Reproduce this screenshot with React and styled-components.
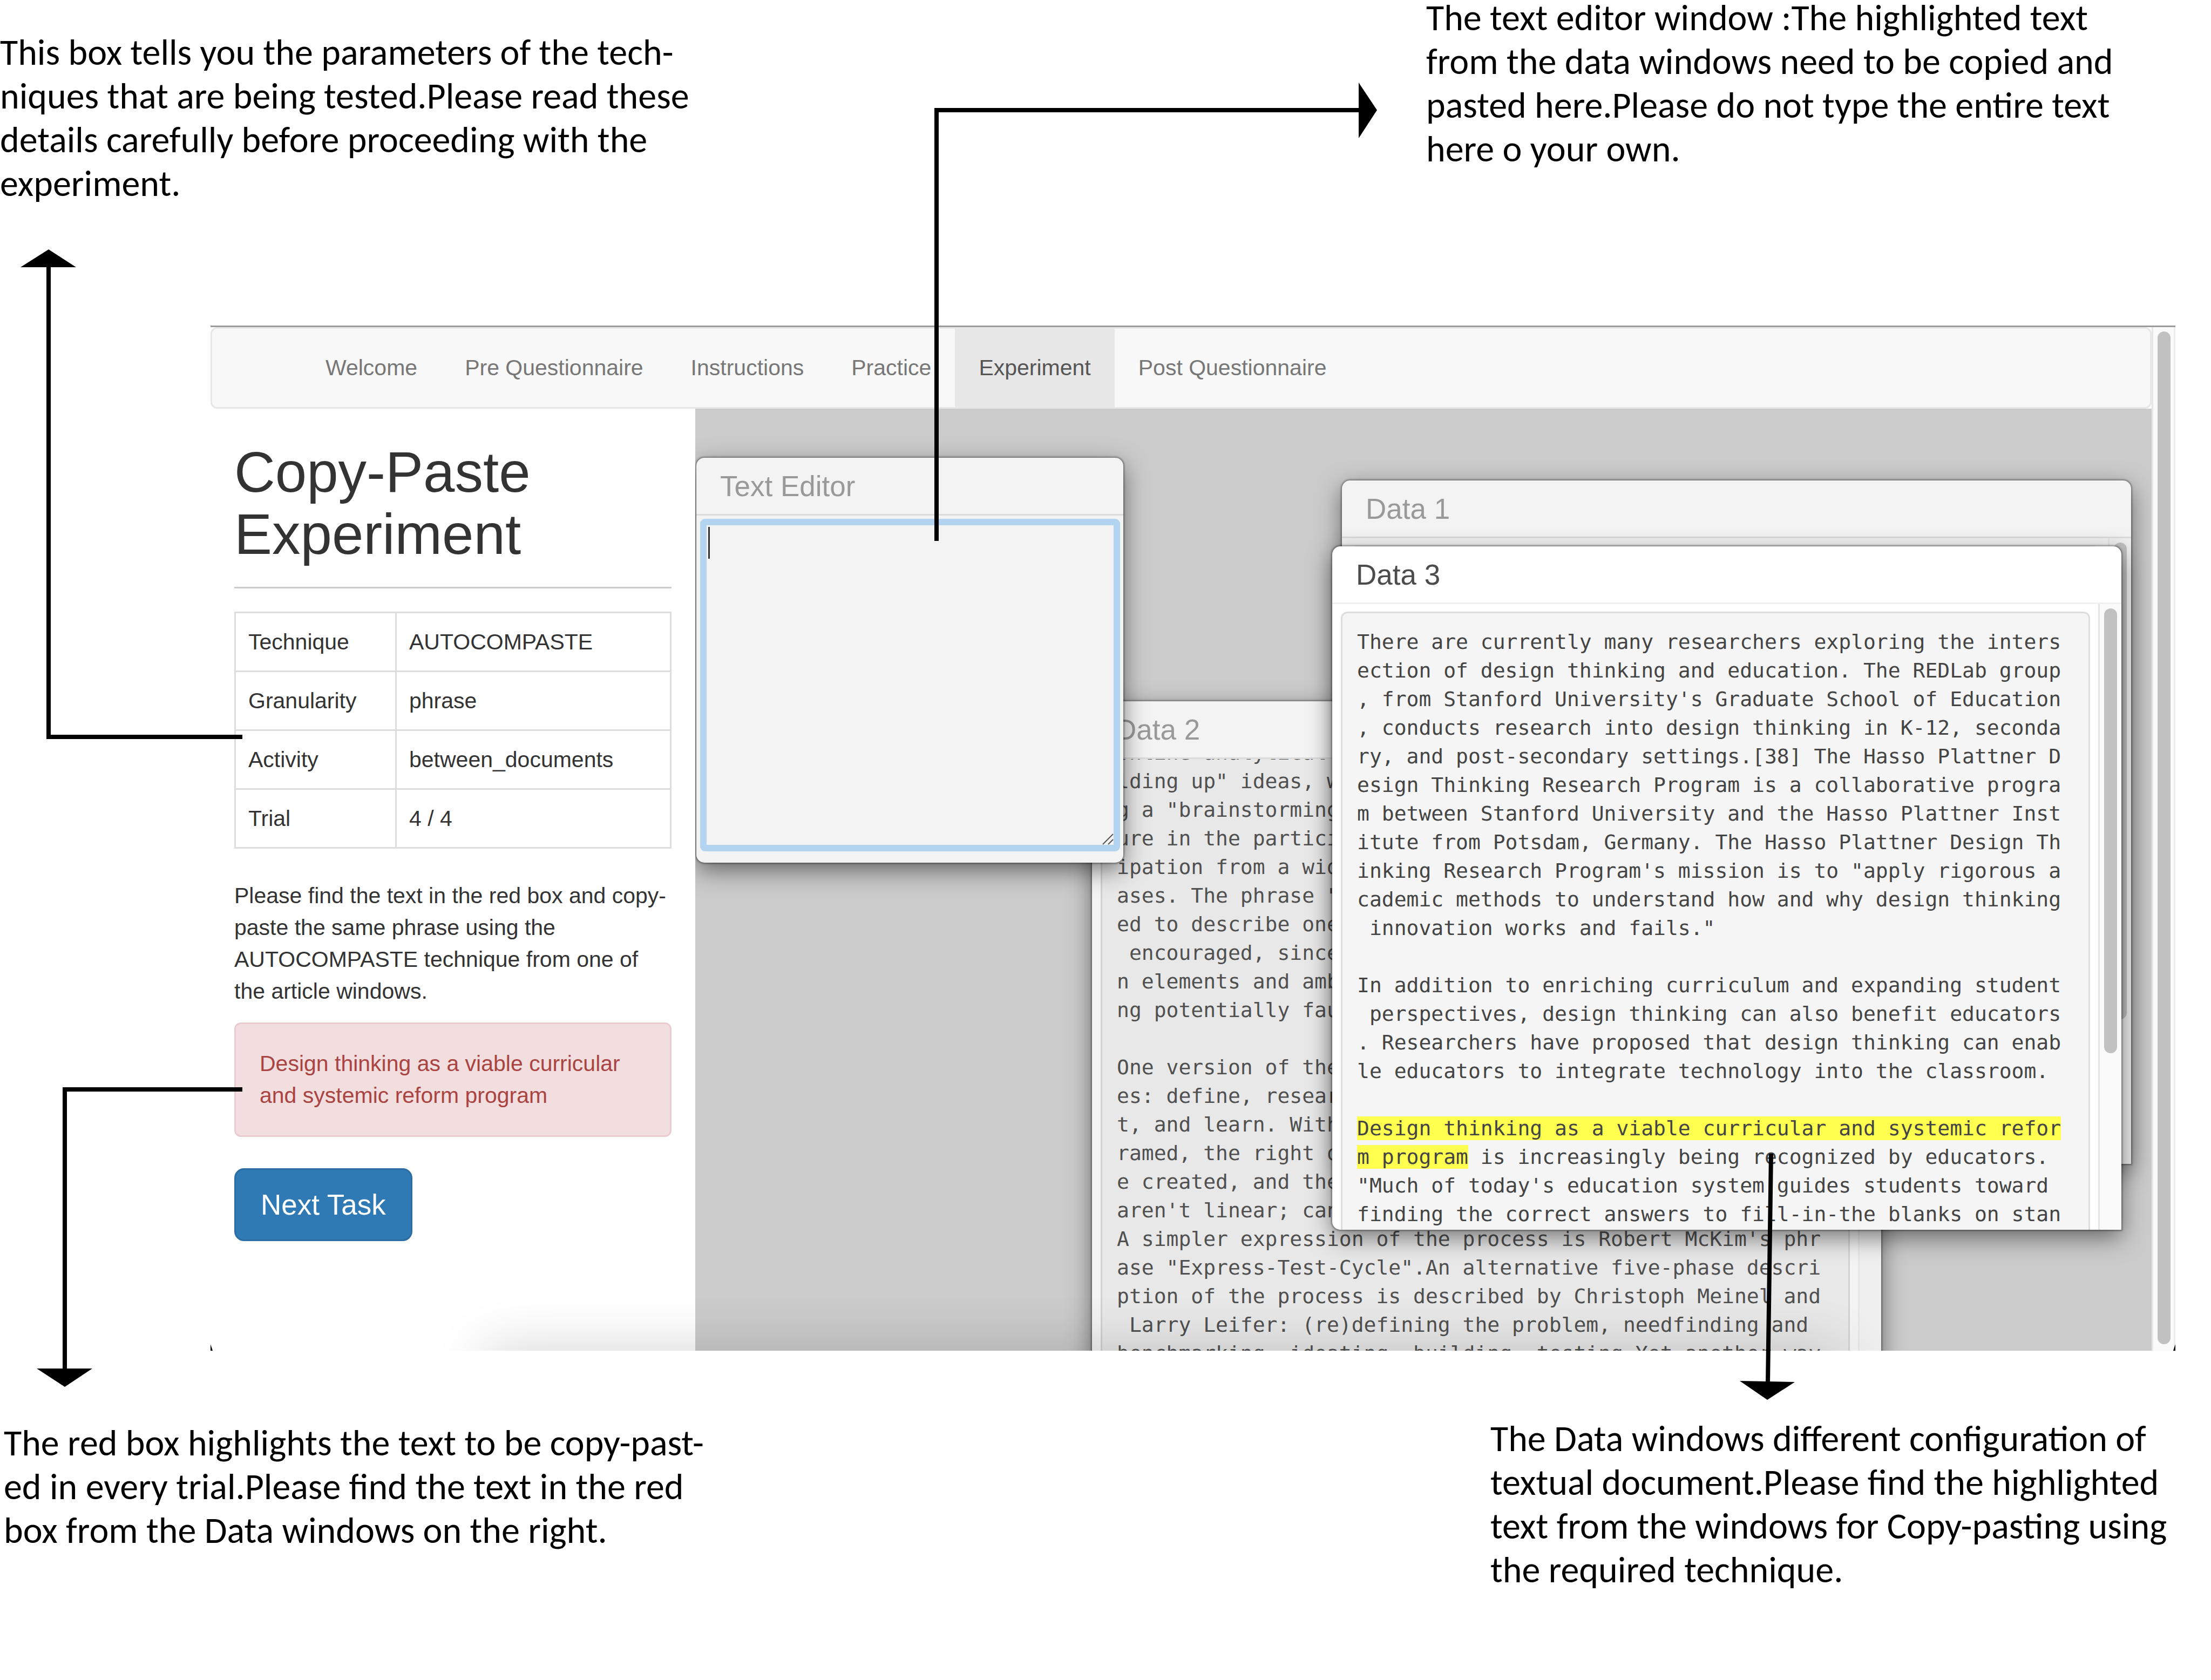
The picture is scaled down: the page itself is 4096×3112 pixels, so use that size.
import React from 'react';
import styled, { createGlobalStyle, css } from 'styled-components';

const sans = '"Liberation Sans", Arial, sans-serif';
const mono = '"DejaVu Sans Mono", monospace';

const GlobalStyle = createGlobalStyle`
  *, *::before, *::after { box-sizing: border-box; }
  body { margin: 0; background: #fff; }
`;

const Page = styled.div`
  position: relative;
  overflow: hidden;
  min-height: 100vh;
  display: flex;
  flex-direction: column;
  font-family: ${sans};
  font-size: 41px;
  line-height: 59px;
  color: #333;
`;

const NotesRow = styled.section`
  display: flex;
  justify-content: space-between;
  align-items: flex-start;
  ${(p) => (p.$place === 'top'
    ? css`margin-top: -8px; height: 611px; padding: 0 66px 0 0;`
    : css`padding: 122px 0 0 7px;`)}
`;

const Note = styled.p`
  margin: 0;
  padding-top: ${(p) => p.$drop || 0}px;
  width: ${(p) => p.$width}px;
  font-family: Carlito, Lato, sans-serif;
  font-size: 68px;
  line-height: 81px;
  color: #000;
  white-space: pre-line;
`;

const Frame = styled.main`
  position: relative;
  margin: 0 66px 0 390px;
  height: 1899px;
  border-top: 3px solid #9c9a9a;
  display: flex;
  overflow: hidden;
`;

const AppArea = styled.div`
  flex: 1;
  min-width: 0;
  display: flex;
  flex-direction: column;
`;

const Nav = styled.nav`
  display: flex;
  height: 151px;
  padding-left: 166px;
  background: #f8f8f8;
  border: 3px solid #e7e7e7;
  border-radius: 12px;
`;

const NavLink = styled.a`
  display: flex;
  align-items: center;
  padding: 0 44px;
  color: ${(p) => (p.$active ? '#555' : '#777')};
  background: ${(p) => (p.$active ? '#e7e7e7' : 'transparent')};
  text-decoration: none;
`;

const Workspace = styled.div`
  flex: 1;
  min-height: 0;
  display: flex;
`;

const Sidebar = styled.aside`
  width: 898px;
  flex: none;
  padding: 60px 44px 0;
`;

const Title = styled.h1`
  margin: 0;
  padding-bottom: 40px;
  border-bottom: 3px solid #ccc;
  font-size: 105px;
  line-height: 115px;
  font-weight: 400;
`;

const Params = styled.table`
  width: 100%;
  margin-top: 43px;
  border-collapse: collapse;
  table-layout: fixed;
  th, td {
    height: 109px;
    padding: 0 23px;
    border: 3px solid #ddd;
    text-align: left;
    font-weight: 400;
  }
  th { width: 298px; }
`;

const Help = styled.p`
  margin: 58px 0 28px;
`;

const Phrase = styled.div`
  padding: 44px;
  border: 3px solid #ebccd1;
  border-radius: 12px;
  background: #f2dede;
  color: #a94442;
`;

const NextButton = styled.button`
  margin-top: 58px;
  padding: 35px 46px;
  border: 3px solid #2e6da4;
  border-radius: 18px;
  background: #2f7ab4;
  color: #fff;
  font-family: ${sans};
  font-size: 53px;
  line-height: 59px;
`;

const Canvas = styled.div`
  position: relative;
  flex: 1;
  background: #cbcbcb;
  overflow: hidden;
`;

const Win = styled.section`
  position: absolute;
  left: ${(p) => p.$x}px;
  top: ${(p) => p.$y}px;
  width: ${(p) => p.$w}px;
  height: ${(p) => p.$h}px;
  display: flex;
  flex-direction: column;
  overflow: hidden;
  border-radius: ${(p) => (p.$scrolls ? '15px 15px 0 15px' : '15px')};
  background: ${(p) => (p.$active ? '#fff' : '#f3f3f3')};
  color: ${(p) => (p.$active ? '#4c4c4c' : '#999')};
  box-shadow: 0 0 3px 2px rgba(0, 0, 0, 0.35), 0 14px 44px rgba(0, 0, 0, 0.5);
`;

const WinTitle = styled.h2`
  margin: 0;
  flex: none;
  padding: 25px 44px 23px;
  border-bottom: 3px solid ${(p) => (p.$active ? '#f0f0f0' : '#dcdcdc')};
  font-size: 53px;
  line-height: 56px;
  font-weight: 400;
`;

const EditorBody = styled.div`
  position: relative;
  flex: 1;
  display: flex;
  padding: 6px 6px 21px 7px;
`;

const Editor = styled.textarea`
  flex: 1;
  border: 12px solid #b3d4f0;
  border-radius: 9px;
  padding: 3px 6px;
  background: #f3f3f3;
  font-family: ${sans};
  font-size: 41px;
  line-height: 59px;
  outline: none;
  resize: none;
`;

const Caret = styled.span`
  position: absolute;
  left: 22px;
  top: 21px;
  width: 3px;
  height: 59px;
  background: #333;
`;

const Grip = styled.svg`
  position: absolute;
  right: 18px;
  bottom: 33px;
  width: 21px;
  height: 21px;
`;

const DocBody = styled.div`
  flex: 1;
  min-height: 0;
  display: flex;
  overflow: hidden;
`;

const Doc = styled.pre`
  flex: 1;
  min-width: 0;
  height: 1600px;
  margin: ${(p) => (p.$scrolled ? -68 : 14)}px 15px 0 16px;
  padding: 27px;
  border: 3px solid ${(p) => (p.$active ? '#ddd' : '#d2d2d2')};
  border-radius: 12px;
  background: ${(p) => (p.$active ? '#f5f5f5' : '#e8e8e8')};
  color: ${(p) => (p.$active ? '#444' : '#505050')};
  font-family: ${mono};
  font-size: 38px;
  line-height: 53px;
`;

const Mark = styled.mark`
  background: #ffff50;
  color: inherit;
`;

const Track = styled.div`
  flex: none;
  width: ${(p) => p.$w}px;
  padding: 8px 8px 0;
  border-left: 3px solid #e6e6e6;
  background: ${(p) => (p.$dim ? '#efefef' : '#fafafa')};
`;

const PageTrack = styled(Track)`
  padding-right: 6px;
  border-right: 3px solid #ececec;
`;

const Thumb = styled.div`
  height: ${(p) => p.$h}px;
  border-radius: 12px;
  background: #c1c1c1;
`;

const DockShade = styled.div`
  position: absolute;
  left: 530px;
  right: 640px;
  bottom: -60px;
  height: 40px;
  box-shadow: 0 0 100px 20px rgba(0, 0, 0, 0.19);
  pointer-events: none;
`;

const Connectors = styled.svg`
  position: absolute;
  left: 0;
  top: 0;
  width: 4096px;
  height: 3112px;
  pointer-events: none;
`;

const tabs = ['Welcome', 'Pre Questionnaire', 'Instructions', 'Practice', 'Experiment', 'Post Questionnaire'];

const params = [
  ['Technique', 'AUTOCOMPASTE'],
  ['Granularity', 'phrase'],
  ['Activity', 'between_documents'],
  ['Trial', '4 / 4'],
];

const data2 = `online analytical 
lding up" ideas, w
g a "brainstorming
ure in the partici
ipation from a wid
ases. The phrase "
ed to describe one
 encouraged, since
n elements and amb
ng potentially fau

One version of the
es: define, resear
t, and learn. With
ramed, the right q
e created, and the
aren't linear; can
A simpler expression of the process is Robert McKim's phr
ase "Express-Test-Cycle".An alternative five-phase descri
ption of the process is described by Christoph Meinel and
 Larry Leifer: (re)defining the problem, needfinding and 
benchmarking, ideating, building, testing.Yet another way`;

const data3Start = `There are currently many researchers exploring the inters
ection of design thinking and education. The REDLab group
, from Stanford University's Graduate School of Education
, conducts research into design thinking in K-12, seconda
ry, and post-secondary settings.[38] The Hasso Plattner D
esign Thinking Research Program is a collaborative progra
m between Stanford University and the Hasso Plattner Inst
itute from Potsdam, Germany. The Hasso Plattner Design Th
inking Research Program's mission is to "apply rigorous a
cademic methods to understand how and why design thinking
 innovation works and fails."

In addition to enriching curriculum and expanding student
 perspectives, design thinking can also benefit educators
. Researchers have proposed that design thinking can enab
le educators to integrate technology into the classroom.

`;

const data3Mark = `Design thinking as a viable curricular and systemic refor
m program`;

const data3End = ` is increasingly being recognized by educators.
"Much of today's education system guides students toward
finding the correct answers to fill-in-the blanks on stan`;

function DataWindow({ title, x, y, active, scrolled, thumb, children }) {
  return (
    <Win $x={x} $y={y} $w={1462} $h={1266} $active={active} $scrolls>
      <WinTitle $active={active}>{title}</WinTitle>
      <DocBody>
        <Doc $active={active} $scrolled={scrolled}>{children}</Doc>
        <Track $w={43} $dim={!active}>{thumb && <Thumb $h={thumb} />}</Track>
      </DocBody>
    </Win>
  );
}

export default function App() {
  return (
    <>
      <GlobalStyle />
      <Page>
        <NotesRow $place="top">
          <Note $drop={64} $width={1340}>
            {`This box tells you the parameters of the tech-
            niques that are being tested.Please read these
            details carefully before proceeding with the
            experiment.`}
          </Note>
          <Note $width={1388}>
            {`The text editor window :The highlighted text
            from the data windows need to be copied and
            pasted here.Please do not type the entire text
            here o your own.`}
          </Note>
        </NotesRow>

        <Frame>
          <AppArea>
            <Nav>
              {tabs.map((t) => (
                <NavLink key={t} href="#" $active={t === 'Experiment'}>{t}</NavLink>
              ))}
            </Nav>
            <Workspace>
              <Sidebar>
                <Title>Copy-Paste Experiment</Title>
                <Params>
                  <tbody>
                    {params.map(([k, v]) => (
                      <tr key={k}><th scope="row">{k}</th><td>{v}</td></tr>
                    ))}
                  </tbody>
                </Params>
                <Help>
                  Please find the text in the red box and copy-paste the same phrase using the
                  AUTOCOMPASTE technique from one of the article windows.
                </Help>
                <Phrase>Design thinking as a viable curricular and systemic reform program</Phrase>
                <NextButton type="button">Next Task</NextButton>
              </Sidebar>
              <Canvas>
                <DataWindow title="Data 2" x={735} y={542} scrolled>{data2}</DataWindow>
                <Win $x={2} $y={91} $w={791} $h={750}>
                  <WinTitle id="editor-title">Text Editor</WinTitle>
                  <EditorBody>
                    <Editor aria-labelledby="editor-title" />
                    <Caret />
                    <Grip viewBox="0 0 21 21">
                      <path d="M1 20L20 1M11 20L20 11" stroke="#555" strokeWidth="2" fill="none" />
                    </Grip>
                  </EditorBody>
                </Win>
                <DataWindow title="Data 1" x={1198} y={133} thumb={883} />
                <DataWindow title="Data 3" x={1180} y={255} active thumb={824}>
                  {data3Start}<Mark>{data3Mark}</Mark>{data3End}
                </DataWindow>
              </Canvas>
            </Workspace>
          </AppArea>
          <PageTrack $w={44}><Thumb $h={1876} /></PageTrack>
          <DockShade />
        </Frame>

        <NotesRow $place="bottom">
          <Note $drop={8} $width={1340}>
            {`The red box highlights the text to be copy-past-
            ed in every trial.Please find the text in the red
            box from the Data windows on the right.`}
          </Note>
          <Note $width={1335}>
            {`The Data windows different configuration of
            textual document.Please find the highlighted
            text from the windows for Copy-pasting using
            the required technique.`}
          </Note>
        </NotesRow>

        <Connectors viewBox="0 0 4096 3112" aria-hidden="true">
          <g fill="none" stroke="#000" strokeWidth="8">
            <path d="M449 1365H90V490" />
            <path d="M449 2018H120V2540" />
            <path d="M1735 1002V204H2520" />
            <path d="M3281 2137L3275 2562" />
          </g>
          <path d="M90 462L141 495H38Z" />
          <path d="M120 2569L171 2535H68Z" />
          <path d="M2551 204L2517 153V256Z" />
          <path d="M3274 2593L3325 2560L3223 2558Z" />
          <path d="M390 2490L394 2502H390Z" />
          <path d="M4030 2490L4026 2502H4030Z" />
        </Connectors>
      </Page>
    </>
  );
}
